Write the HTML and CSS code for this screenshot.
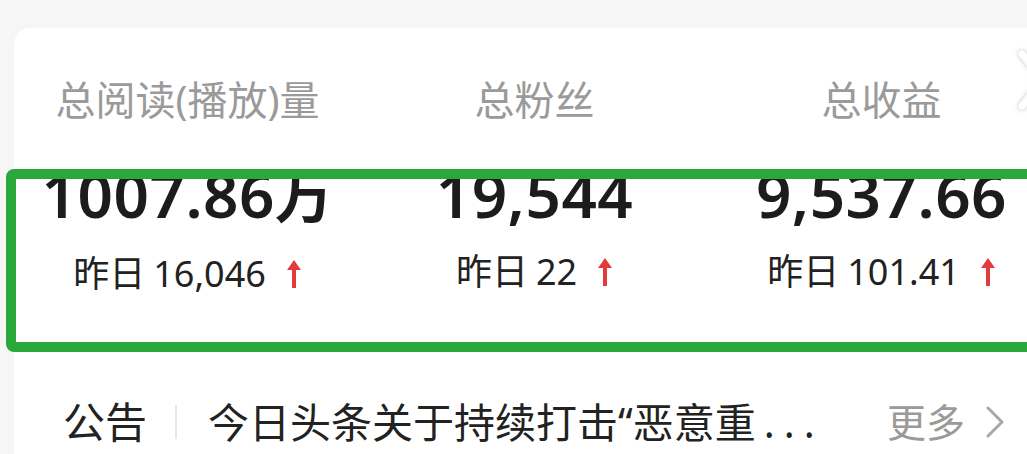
FILE: index.html
```html
<!DOCTYPE html>
<html lang="zh-CN">
  <head>
    <meta charset="UTF-8" />
    <meta name="viewport" content="width=device-width, initial-scale=1.0" />
    <title>数据概览</title>
    <link rel="stylesheet" href="styles.css">
  </head>
  <body>
    <!-- 数据卡片 -->
    <div class="card">
      <svg class="more-arrow" width="28" height="64" viewBox="0 0 28 64">
        <path d="M4 6 L24 32 L4 58" />
      </svg>

      <div class="stats">
        <div class="stat">
          <div class="stat-label">总阅读(播放)量</div>
          <div class="stat-value">1007.86<span class="unit">万</span></div>
          <div class="stat-sub">
            <span class="sub-key">昨日</span>
            <span>16,046</span>
            <svg class="up" width="16" height="30" viewBox="0 0 16 30">
              <path d="M8 1 L15 11 L10 11 L10 29 L6 29 L6 11 L1 11 Z" />
            </svg>
          </div>
        </div>

        <div class="stat">
          <div class="stat-label">总粉丝</div>
          <div class="stat-value">19,544</div>
          <div class="stat-sub">
            <span class="sub-key">昨日</span>
            <span>22</span>
            <svg class="up" width="16" height="30" viewBox="0 0 16 30">
              <path d="M8 1 L15 11 L10 11 L10 29 L6 29 L6 11 L1 11 Z" />
            </svg>
          </div>
        </div>

        <div class="stat">
          <div class="stat-label">总收益</div>
          <div class="stat-value">9,537.66</div>
          <div class="stat-sub">
            <span class="sub-key">昨日</span>
            <span>101.41</span>
            <svg class="up" width="16" height="30" viewBox="0 0 16 30">
              <path d="M8 1 L15 11 L10 11 L10 29 L6 29 L6 11 L1 11 Z" />
            </svg>
          </div>
        </div>
      </div>

      <!-- 公告 -->
      <div class="notice">
        <span class="notice-tag">公告</span>
        <span class="notice-line"></span>
        <span class="notice-title">今日头条关于持续打击“恶意重<span class="dots">...</span></span>
        <span class="notice-more">更多</span>
        <svg class="notice-arrow" width="20" height="34" viewBox="0 0 20 34">
          <path d="M3 3 L17 17 L3 31" />
        </svg>
      </div>
    </div>

    <!-- 标注框 -->
    <div class="highlight"></div>
  </body>
</html>
```

FILE: styles.css
```css
* {
  margin: 0;
  padding: 0;
  box-sizing: border-box;
  font-family: "Noto Sans", "Noto Sans CJK SC", sans-serif;
}

body {
  background: #f6f6f6;
  width: 1027px;
  height: 454px;
  overflow: hidden;
  position: relative;
}

.card {
  position: relative;
  margin: 28px 0 0 14px;
  width: 1070px;
  height: 426px;
  background: #fff;
  border-radius: 16px 16px 0 0;
  padding-top: 52px;
}

.more-arrow {
  position: absolute;
  top: 20px;
  left: 1004px;
  fill: none;
  stroke: #fff;
  stroke-width: 7;
  stroke-linecap: round;
  stroke-linejoin: round;
  filter: drop-shadow(0 0 2px rgba(0, 0, 0, 0.25));
}

.stats {
  display: grid;
  grid-template-columns: 347px 347px 347px;
}

.stat {
  display: flex;
  flex-direction: column;
  align-items: center;
}

.stat-label {
  font-size: 40px;
  line-height: 40px;
  color: #9a9a9a;
}

.stat-value {
  margin-top: 43px;
  font-size: 62px;
  line-height: 62px;
  font-weight: 600;
  color: #1c1c1c;
  letter-spacing: 0.5px;
}

.unit {
  font-size: 58px;
}

.stat-sub {
  margin-top: 27px;
  display: flex;
  align-items: center;
  gap: 8px;
  font-size: 36px;
  line-height: 40px;
  color: #222;
}

.up {
  margin-left: 12px;
  fill: #e23b3b;
}

.notice {
  margin-top: 106px;
  display: flex;
  align-items: center;
  padding-left: 49px;
  height: 44px;
  font-size: 41px;
  line-height: 44px;
  color: #222;
}

.notice-tag {
  font-size: 42px;
}

.notice-line {
  width: 2px;
  height: 34px;
  background: #e6e6e6;
  margin: 0 31px 0 28px;
}

.notice-title {
  width: 679px;
  white-space: nowrap;
}

.dots {
  letter-spacing: 9px;
  margin-left: 8px;
}

.notice-more {
  color: #9a9a9a;
  font-size: 39px;
}

.notice-arrow {
  margin-left: 20px;
  fill: none;
  stroke: #a8a8a8;
  stroke-width: 3;
  stroke-linecap: round;
  stroke-linejoin: round;
}

.highlight {
  position: absolute;
  left: 6px;
  top: 169px;
  width: 1040px;
  height: 183px;
  border: 10px solid #2aa83b;
  border-radius: 8px;
}
```
